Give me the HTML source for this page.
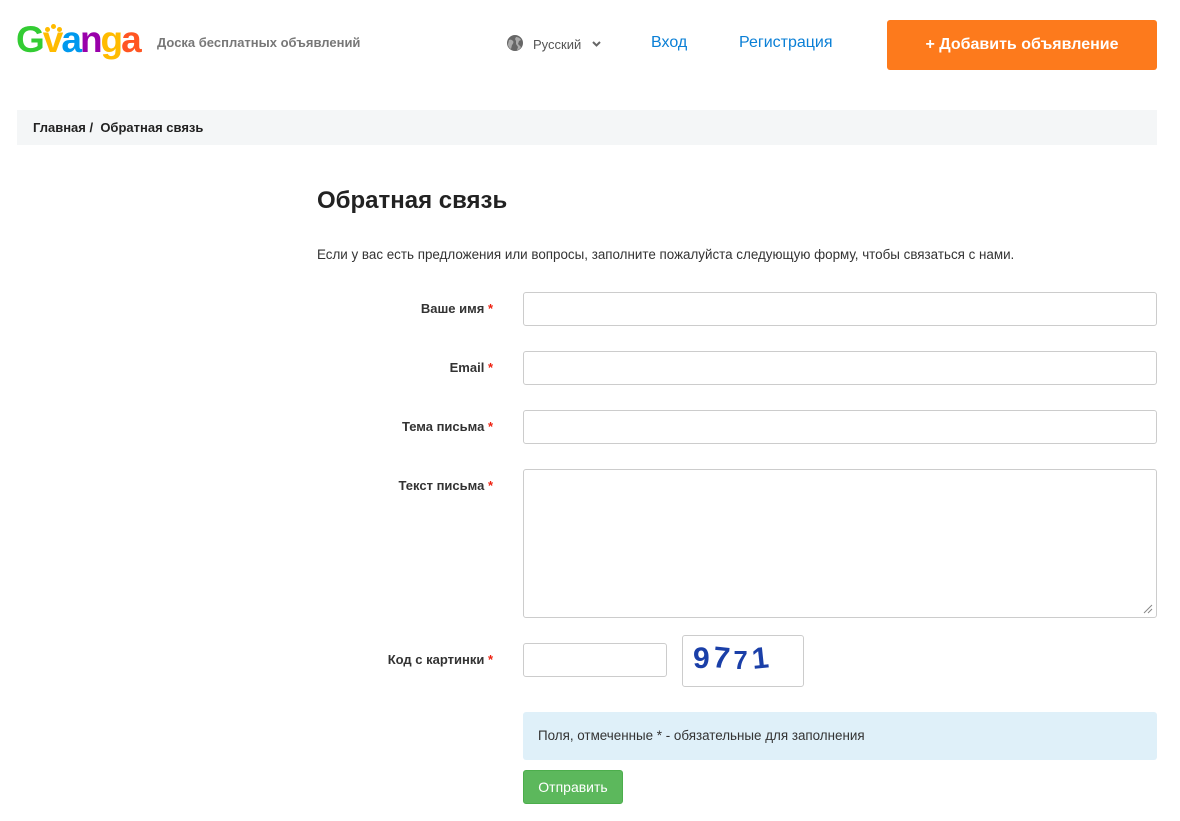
<!DOCTYPE html>
<html><head><meta charset="utf-8"><style>
*{box-sizing:border-box;margin:0;padding:0}
body{width:1180px;height:821px;background:#fff;font-family:"Liberation Sans",sans-serif;color:#222;position:relative;overflow:hidden}
.a{position:absolute}
.logo{left:16px;top:20px;font-size:37px;font-weight:bold;letter-spacing:-2px;line-height:40px}
.tag{left:157px;top:35px;font-size:13px;font-weight:bold;color:#777}
.nav{top:34px;font-size:16px;color:#0a7fd6}
.btn{left:887px;top:20px;width:270px;height:50px;background:#fd7a1c;border-radius:3px;color:#fff;font-size:16px;font-weight:bold;text-align:center;line-height:50px}
.bc{left:17px;top:110px;width:1140px;height:35px;background:#f4f6f7;font-size:13px;font-weight:bold;line-height:35px;padding-left:16px}
h1{position:absolute;left:317px;top:187px;font-size:24px;font-weight:bold;color:#222}
.lbl{width:300px;left:193px;text-align:right;font-size:13px;font-weight:bold;color:#333}
.lbl b{color:#e21}
.in{left:523px;width:634px;height:34px;border:1px solid #ccc;border-radius:3px}
</style></head><body>
<div class="a logo"><span style="color:#3c3">G</span><span style="color:#fb0">v</span><span style="color:#09e">a</span><span style="color:#90a">n</span><span style="color:#fb0">g</span><span style="color:#f52">a</span></div>
<div class="a" style="left:45px;top:27px;width:5px;height:5px;border-radius:50%;background:#fb0"></div>
<div class="a" style="left:51px;top:24px;width:5px;height:5px;border-radius:50%;background:#fb0"></div>
<div class="a" style="left:57px;top:27px;width:5px;height:5px;border-radius:50%;background:#fb0"></div>
<div class="a tag">Доска бесплатных объявлений</div>
<svg class="a" style="left:507px;top:35px" width="16" height="16" viewBox="0 0 16 16"><circle cx="8" cy="8" r="8" fill="#666"/><path d="M2 5c2-1 3 0 4 1s0 3 -1 4l-1 4c-2-1-3-3-3-5zM9 2c2 0 4 1 5 3l-2 1-1 3 2 2 1 1c-1 2-3 3-4 3l1-3-2-3 0-3-1-2z" fill="#aaa"/></svg>
<div class="a" style="left:533px;top:37px;font-size:13px;color:#555">Русский</div>
<svg class="a" style="left:592px;top:41px" width="9" height="6"><path d="M1 1l3.5 3.5L8 1" stroke="#666" stroke-width="2" fill="none"/></svg>
<div class="a nav" style="left:651px">Вход</div>
<div class="a nav" style="left:739px">Регистрация</div>
<div class="a btn">+ Добавить объявление</div>
<div class="a bc">Главная /&nbsp;&nbsp;Обратная связь</div>
<h1>Обратная связь</h1>
<div class="a" style="left:317px;top:247px;font-size:13.4px;color:#333">Если у вас есть предложения или вопросы, заполните пожалуйста следующую форму, чтобы связаться с нами.</div>
<div class="a lbl" style="top:301px">Ваше имя <b>*</b></div><div class="a in" style="top:292px"></div>
<div class="a lbl" style="top:360px">Email <b>*</b></div><div class="a in" style="top:351px"></div>
<div class="a lbl" style="top:419px">Тема письма <b>*</b></div><div class="a in" style="top:410px"></div>
<div class="a lbl" style="top:478px">Текст письма <b>*</b></div><div class="a in" style="top:469px;height:149px"></div>
<svg class="a" style="left:1143px;top:604px" width="10" height="10"><path d="M9 1L1 9M9 5L5 9" stroke="#888"/></svg>
<div class="a lbl" style="top:652px">Код с картинки <b>*</b></div>
<div class="a in" style="top:643px;width:144px"></div>
<div class="a" style="left:682px;top:635px;width:122px;height:52px;border:1px solid #ccc;border-radius:3px;color:#1a3fa8;font-weight:bold;font-size:30px;padding:6px 0 0 10px;letter-spacing:3px"><span style="display:inline-block">9</span><span style="display:inline-block;transform:rotate(6deg)">7</span><span style="display:inline-block;transform:scale(.85) translateY(3px)">7</span><span style="display:inline-block;transform:rotate(-6deg)">1</span></div>
<div class="a" style="left:523px;top:712px;width:634px;height:48px;background:#dff0f9;border-radius:3px;font-size:13.4px;color:#333;line-height:48px;padding-left:15px">Поля, отмеченные * - обязательные для заполнения</div>
<div class="a" style="left:523px;top:770px;width:100px;height:34px;background:#5cb85c;border:1px solid #4cae4c;border-radius:3px;color:#fff;font-size:14px;text-align:center;line-height:32px">Отправить</div>
</body></html>
